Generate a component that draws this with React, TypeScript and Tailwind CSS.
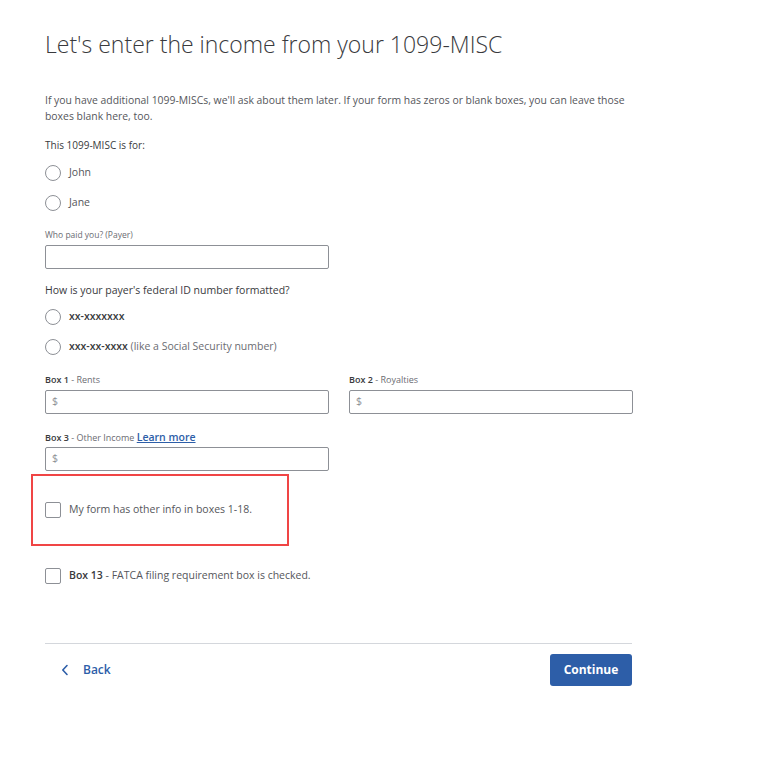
import React from 'react';

const FONT = "font-['Open_Sans','Liberation_Sans',sans-serif]";

const Radio: React.FC<{ children: React.ReactNode }> = ({ children }) => (
  <label className="flex items-center h-[16px]">
    <span className="w-[16px] h-[16px] rounded-full border border-[#8d9096] bg-white shrink-0" />
    <span className="ml-[8px] text-[10.5px] text-[#55565b]">{children}</span>
  </label>
);

const Checkbox: React.FC<{ children: React.ReactNode }> = ({ children }) => (
  <label className="flex items-center h-[16px]">
    <span className="w-[16px] h-[16px] rounded-[2px] border border-[#8d9096] bg-white shrink-0" />
    <span className="ml-[8px] text-[10.5px] text-[#55565b]">{children}</span>
  </label>
);

const MoneyInput: React.FC = () => (
  <div className="h-[24px] w-[284px] border border-[#8d9096] rounded-[2px] flex items-center px-[6px] text-[10.5px] text-[#8d9096]">
    $
  </div>
);

export default function App() {
  return (
    <div className={`${FONT} bg-white w-[774px] h-[778px] text-[#393a3d]`}>
      <div className="pl-[45px] pt-[30px] w-[632px]">
        <h1 className="text-[23px] font-light leading-[28px] text-[#393a3d]">
          Let's enter the income from your 1099-MISC
        </h1>

        <p className="mt-[34px] text-[10.4px] leading-[16px] text-[#55565b]">
          If you have additional 1099-MISCs, we'll ask about them later. If your form has zeros or blank boxes, you can leave those boxes blank here, too.
        </p>

        <p className="mt-[13px] text-[10px] leading-[16px]">This 1099-MISC is for:</p>
        <div className="mt-[12px] flex flex-col gap-[14px]">
          <Radio>John</Radio>
          <Radio>Jane</Radio>
        </div>

        <p className="mt-[18px] text-[8.5px] leading-[12px] text-[#6b6c72]">Who paid you? (Payer)</p>
        <div className="mt-[4px] h-[24px] w-[284px] border border-[#8d9096] rounded-[2px]" />

        <p className="mt-[13px] text-[10.5px] leading-[16px]">How is your payer's federal ID number formatted?</p>
        <div className="mt-[11px] flex flex-col gap-[14px]">
          <Radio>
            <span className="font-semibold text-[10.5px] text-[#393a3d]">xx-xxxxxxx</span>
          </Radio>
          <Radio>
            <span className="font-semibold text-[10.5px] text-[#393a3d]">xxx-xx-xxxx</span>{' '}
            <span className="text-[#6b6c72]">(like a Social Security number)</span>
          </Radio>
        </div>

        <div className="mt-[19px] grid grid-cols-[284px_284px] gap-x-[20px]">
          <div>
            <p className="text-[9px] leading-[12px] text-[#6b6c72]">
              <span className="font-semibold text-[#393a3d]">Box 1</span> - Rents
            </p>
            <div className="mt-[4px]">
              <MoneyInput />
            </div>
          </div>
          <div>
            <p className="text-[9px] leading-[12px] text-[#6b6c72]">
              <span className="font-semibold text-[#393a3d]">Box 2</span> - Royalties
            </p>
            <div className="mt-[4px]">
              <MoneyInput />
            </div>
          </div>
        </div>

        <div className="mt-[17px]">
          <p className="text-[9px] leading-[12px] text-[#6b6c72]">
            <span className="font-semibold text-[#393a3d]">Box 3</span> - Other Income{' '}
            <a className="text-[#2d5ea8] font-semibold underline text-[10.5px]">Learn more</a>
          </p>
          <div className="mt-[3px]">
            <MoneyInput />
          </div>
        </div>

        <div className="-ml-[14px] mt-[3px] w-[258px] h-[72px] border-2 border-[#f04545] flex items-center pl-[12px]">
          <Checkbox>My form has other info in boxes 1-18.</Checkbox>
        </div>

        <div className="mt-[22px]">
          <Checkbox>
            <span className="font-semibold text-[#393a3d]">Box 13</span> - FATCA filing requirement box is checked.
          </Checkbox>
        </div>

        <div className="mt-[59px] border-t border-[#d4d7dc]" />

        <div className="mt-[10px] flex items-center justify-between">
          <button className="flex items-center pl-[16px] text-[12px] font-semibold text-[#2d5ea8]">
            <svg width="8" height="12" viewBox="0 0 8 12" fill="none" stroke="#2d5ea8" strokeWidth="1.6" strokeLinecap="round" strokeLinejoin="round">
              <path d="M6 1.5 1.8 6 6 10.5" />
            </svg>
            <span className="ml-[14px]">Back</span>
          </button>
          <button className="h-[32px] w-[82px] rounded-[3px] bg-[#2d5ea8] text-white text-[12px] font-bold">
            Continue
          </button>
        </div>
      </div>
    </div>
  );
}
